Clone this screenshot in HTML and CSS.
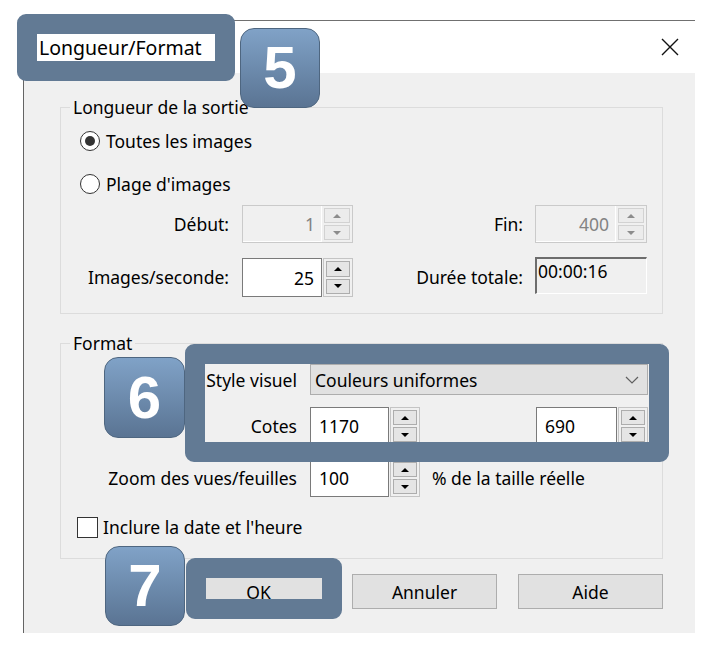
FILE: index.html
```html
<!DOCTYPE html>
<html lang="fr">
<head>
<meta charset="utf-8">
<title>Longueur/Format</title>
<link rel="stylesheet" href="styles.css">
</head>
<body>
<div class="dialog">
  <div class="titlebar">
    <span class="title">Longueur/Format</span>
    <svg class="close" width="18" height="18" viewBox="0 0 18 18"><path d="M1 1L17 17M17 1L1 17" stroke="#111" stroke-width="1.4"/></svg>
  </div>
  <div class="body">
    <fieldset class="group g1">
      <legend>Longueur de la sortie</legend>
      <div class="g1-content">
        <div class="radio-row r1"><span class="radio checked"></span><span>Toutes les images</span></div>
        <div class="radio-row r2"><span class="radio"></span><span>Plage d'images</span></div>
        <div class="g1-grid">
          <span class="lbl">Début:</span>
          <div class="spin dis"><div class="field">1</div><div class="btns"><span class="b up"></span><span class="b dn"></span></div></div>
          <span class="lbl lbl2">Fin:</span>
          <div class="spin dis"><div class="field">400</div><div class="btns"><span class="b up"></span><span class="b dn"></span></div></div>
          <span class="lbl">Images/seconde:</span>
          <div class="spin fps"><div class="field">25</div><div class="btns"><span class="b up"></span><span class="b dn"></span></div></div>
          <span class="lbl lbl2">Durée totale:</span>
          <div class="readout">00:00:16</div>
        </div>
      </div>
    </fieldset>
    <fieldset class="group g2">
      <legend>Format</legend>
      <div class="g2-content">
        <div class="frow row-style">
          <span class="flbl">Style visuel</span>
          <div class="combo"><span>Couleurs uniformes</span><svg class="chev" width="14" height="8" viewBox="0 0 14 8"><path d="M1 1l6 6 6-6" fill="none" stroke="#606060" stroke-width="1.2"/></svg></div>
        </div>
        <div class="frow row-cotes">
          <span class="flbl">Cotes</span>
          <div class="ctrl-row">
            <div class="spin left w110"><div class="field">1170</div><div class="btns"><span class="b up"></span><span class="b dn"></span></div></div>
            <div class="spin left w112 push"><div class="field">690</div><div class="btns"><span class="b up"></span><span class="b dn"></span></div></div>
          </div>
        </div>
        <div class="frow row-zoom">
          <span class="flbl">Zoom des vues/feuilles</span>
          <div class="ctrl-row">
            <div class="spin left w110"><div class="field">100</div><div class="btns"><span class="b up"></span><span class="b dn"></span></div></div>
            <span class="pct">% de la taille réelle</span>
          </div>
        </div>
        <div class="frow row-check"><span class="checkbox"></span><span>Inclure la date et l'heure</span></div>
      </div>
    </fieldset>
    <div class="buttons">
      <button class="btn">OK</button>
      <button class="btn">Annuler</button>
      <button class="btn">Aide</button>
    </div>
  </div>
</div>

<div class="frame f-title"></div>
<div class="frame f-six"></div>
<div class="frame f-seven"></div>
<div class="badge b5">5</div>
<div class="badge b6">6</div>
<div class="badge b7">7</div>
</body>
</html>
```
FILE: styles.css
```css
html, body {
  margin: 0;
  background: #fff;
}
body {
  font-family: "Noto Sans", "Open Sans", sans-serif;
  font-size: 17.5px;
  color: #000;
  position: relative;
  width: 720px;
  height: 652px;
  overflow: hidden;
}
.dialog {
  margin: 20px 0 0 23px;
  width: 672px;
  box-sizing: border-box;
  border-top: 1px solid #707070;
  border-left: 1px solid #646464;
}
.titlebar {
  height: 52px;
  display: flex;
  align-items: center;
  background: #fff;
  padding: 0 16px 0 15px;
}
.title {
  font-size: 19.5px;
}
.close {
  margin-left: auto;
  display: block;
}
.body {
  background: #f0f0f0;
  height: 560px;
  box-sizing: border-box;
  padding: 22px 0 0 36px;
}
fieldset.group {
  margin: 0;
  padding: 0;
  width: 603px;
  min-width: 0;
  box-sizing: border-box;
  border: 1px solid #dcdcdc;
}
fieldset.group legend {
  margin-left: 9px;
  padding: 0 3px;
  line-height: 24px;
  font-size: 17.5px;
}
fieldset.g2 {
  margin-top: 17px;
}
.g1-content {
  padding: 0 15px 16px 19px;
}
.radio-row {
  display: flex;
  align-items: center;
}
.r1 { height: 44px; }
.r2 { height: 42px; }
.radio {
  width: 20px;
  height: 20px;
  box-sizing: border-box;
  border: 1px solid #333;
  border-radius: 50%;
  background: #fff;
  margin-right: 6px;
  display: flex;
  align-items: center;
  justify-content: center;
}
.radio.checked::before {
  content: "";
  width: 10px;
  height: 10px;
  border-radius: 50%;
  background: #333;
}
.g1-grid {
  display: grid;
  grid-template-columns: 162px 111px 182px 112px;
  grid-template-rows: 38px 40px;
  row-gap: 14px;
}
.lbl {
  text-align: right;
  padding-right: 13px;
  align-self: center;
  white-space: nowrap;
}
.lbl2 {
  padding-right: 12px;
}
.spin {
  display: flex;
  height: 38px;
  box-sizing: border-box;
}
.field {
  flex: 1;
  background: #fff;
  border: 1px solid #7a7a7a;
  display: flex;
  align-items: center;
  justify-content: flex-end;
  padding-right: 7px;
}
.spin.left .field {
  justify-content: flex-start;
  padding: 0 0 0 8px;
}
.btns {
  width: 30px;
  box-sizing: border-box;
  border: 1px solid #c4c4c4;
  margin-left: 1px;
  padding: 2px;
  display: flex;
  flex-direction: column;
  gap: 2px;
}
.b {
  flex: 1;
  border: 1px solid #adadad;
  background: #e5e5e5;
  display: flex;
  align-items: center;
  justify-content: center;
}
.b::before {
  content: "";
  border-left: 4px solid transparent;
  border-right: 4px solid transparent;
}
.b.up::before { border-bottom: 4px solid #000; }
.b.dn::before { border-top: 4px solid #000; }
.spin.dis {
  border: 1px solid #cacaca;
}
.spin.dis .field {
  border: none;
  background: #f0f0f0;
  color: #838383;
  box-shadow: inset -1px -1px 0 #fff;
}
.spin.dis .btns {
  border: none;
  margin-left: 0;
}
.spin.dis .b {
  border-color: #d2d2d2;
  background: #ececec;
}
.spin.dis .b.up::before { border-bottom-color: #8c8c8c; }
.spin.dis .b.dn::before { border-top-color: #8c8c8c; }
.spin.fps {
  margin-top: 1px;
  height: 39px;
}
.readout {
  height: 37px;
  box-sizing: border-box;
  border-top: 2px solid #6d6d6d;
  border-left: 2px solid #6d6d6d;
  border-right: 1px solid #fff;
  border-bottom: 1px solid #fff;
  background: #f0f0f0;
  padding-left: 1px;
  line-height: 24px;
}
.g2-content {
  padding: 0 14px 16px 16px;
}
.frow {
  display: flex;
  align-items: center;
}
.row-style { height: 31px; margin-top: 9px; }
.row-cotes { height: 38px; margin-top: 12px; }
.row-zoom { height: 38px; margin-top: 14px; }
.row-check { height: 30px; margin-top: 15px; }
.flbl {
  width: 233px;
  box-sizing: border-box;
  padding-right: 13px;
  text-align: right;
  white-space: nowrap;
  flex: none;
}
.combo {
  width: 338px;
  height: 31px;
  box-sizing: border-box;
  background: #e1e1e1;
  border: 1px solid #adadad;
  display: flex;
  align-items: center;
  padding: 0 8px 0 4px;
}
.chev {
  margin-left: auto;
  display: block;
}
.ctrl-row {
  width: 338px;
  display: flex;
  align-items: center;
}
.w110 { width: 110px; }
.w112 { width: 112px; }
.push { margin-left: auto; }
.pct {
  margin-left: 12px;
}
.checkbox {
  width: 21px;
  height: 21px;
  box-sizing: border-box;
  border: 1px solid #333;
  background: #fff;
  margin-right: 5px;
}
.buttons {
  width: 603px;
  display: flex;
  justify-content: flex-end;
  gap: 21px;
  margin-top: 15px;
}
.btn {
  width: 145px;
  height: 35px;
  font: inherit;
  color: #000;
  background: #e1e1e1;
  border: 1px solid #adadad;
  padding: 0;
}

/* annotation overlays */
.frame {
  position: absolute;
  box-sizing: border-box;
  border: 20px solid #627a94;
  border-radius: 9px;
}
.f-title { left: 17px; top: 14px; width: 218px; height: 67px; }
.f-six { left: 185px; top: 344px; width: 484px; height: 118px; }
.f-seven { left: 186px; top: 558px; width: 156px; height: 61px; }
.badge {
  position: absolute;
  width: 80px;
  height: 80px;
  box-sizing: border-box;
  border-radius: 14px;
  border: 1px solid #4e6680;
  background: linear-gradient(#80a2c7, #5a7493);
  color: #fff;
  font-family: "Liberation Sans", Arial, sans-serif;
  font-weight: bold;
  font-size: 60px;
  line-height: 78px;
  text-align: center;
}
.b5 { left: 240px; top: 28px; }
.b6 { left: 104px; top: 357px; width: 81px; height: 81px; line-height: 79px; }
.b7 { left: 105px; top: 546px; }
```
